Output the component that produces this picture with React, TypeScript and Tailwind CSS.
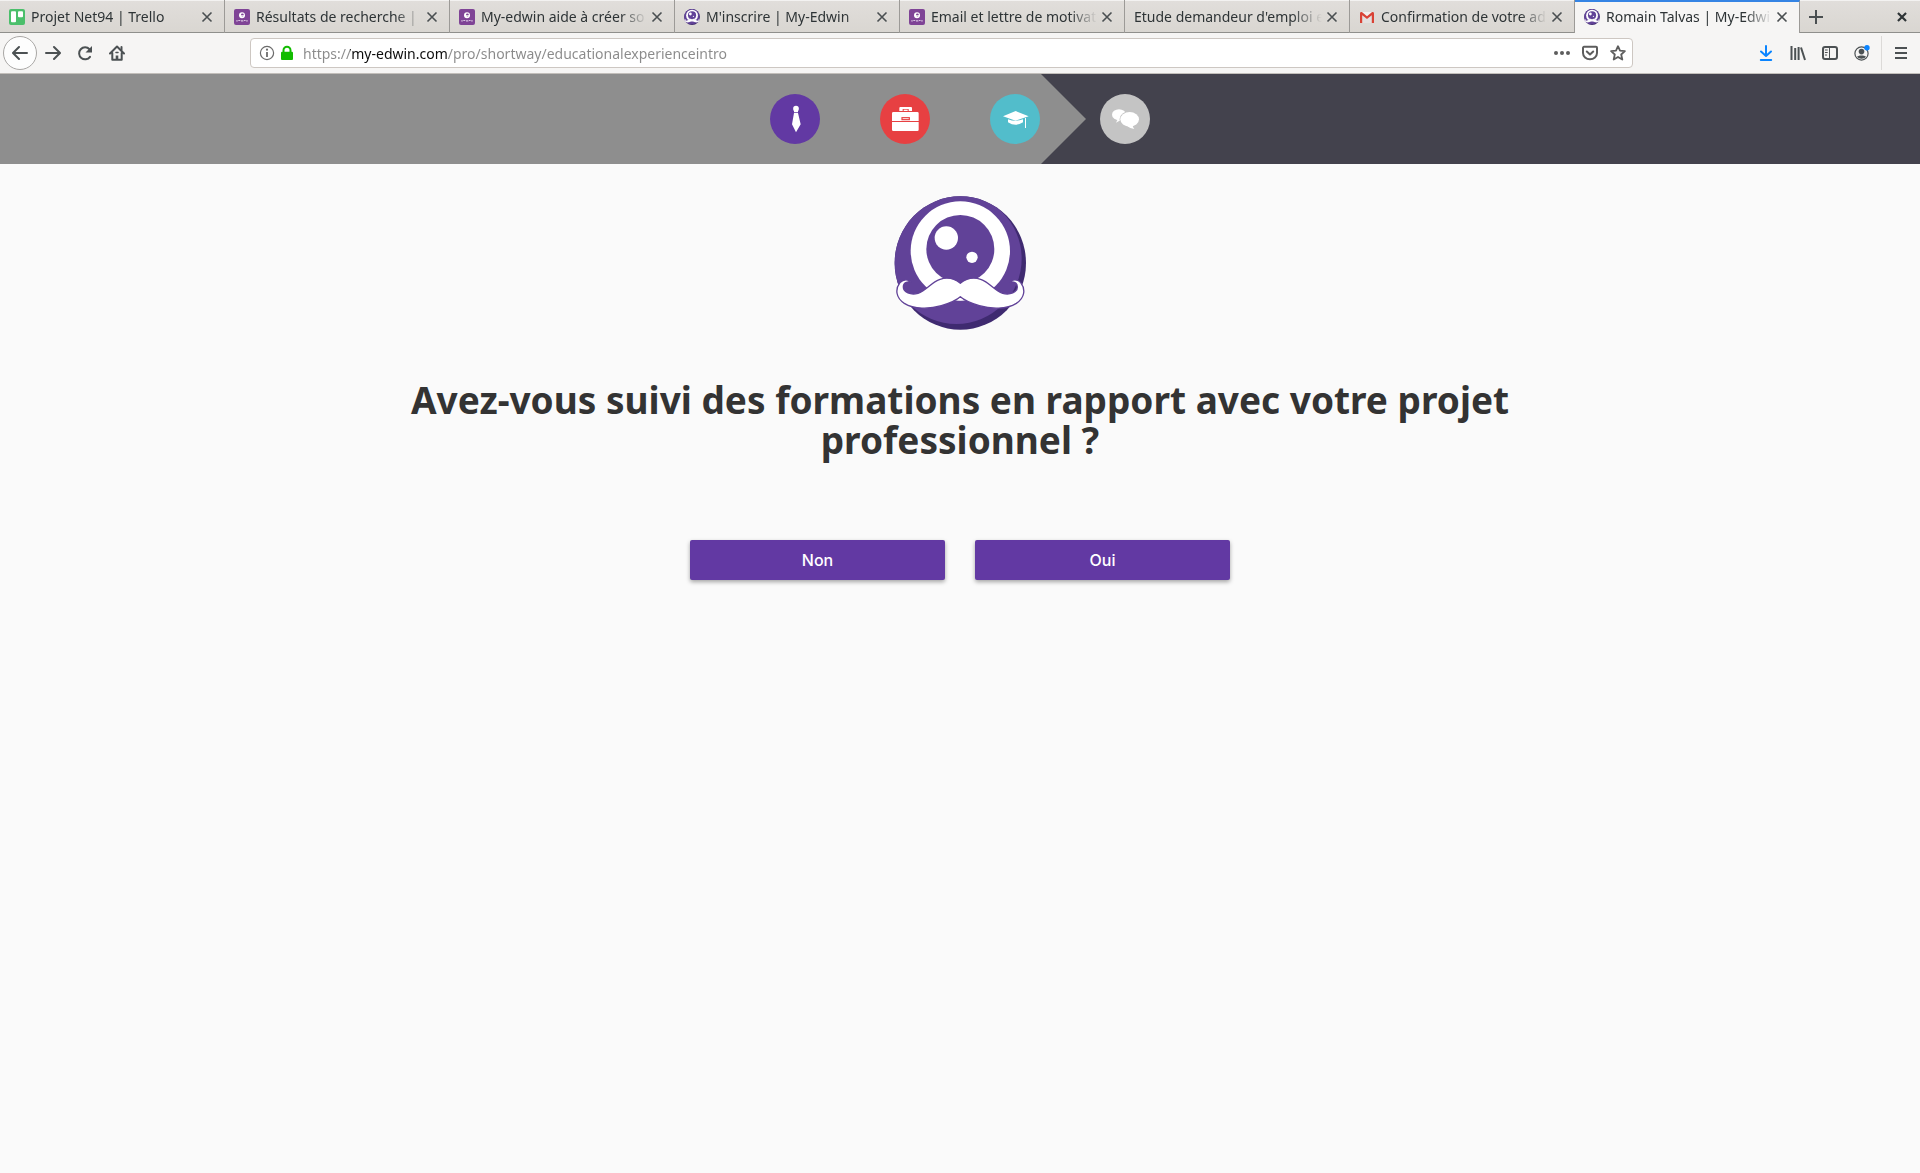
import React from "react";
import clsx from "clsx";

type Favicon = "trello" | "blog" | "edwin" | "gmail" | null;

const tabs: { title: string; icon: Favicon; active?: boolean }[] = [
  { title: "Projet Net94 | Trello", icon: "trello" },
  { title: "Résultats de recherche | E", icon: "blog" },
  { title: "My-edwin aide à créer so", icon: "blog" },
  { title: "M'inscrire | My-Edwin", icon: "edwin" },
  { title: "Email et lettre de motivat", icon: "blog" },
  { title: "Etude demandeur d'emploi e", icon: null },
  { title: "Confirmation de votre adr", icon: "gmail" },
  { title: "Romain Talvas | My-Edwi", icon: "edwin", active: true },
];

const MOUSTACHE =
  "M243 293 C226 279 204 274 182 281 C155 290 142 314 116 323 C94 329 72 320 72 304 C72 291 84 287 94 290 C88 280 73 279 62 291 C47 310 49 336 75 353 C104 371 150 371 186 360 C211 352 230 345 243 333 C256 345 275 352 300 360 C336 371 382 371 411 353 C437 336 439 310 424 291 C413 279 398 280 392 290 C402 287 414 291 414 304 C414 320 392 329 370 323 C344 314 331 290 304 281 C282 274 260 279 243 293 Z";

function EdwinLogo({ className }: { className?: string }) {
  return (
    <svg viewBox="43 31 398 402" className={className} aria-hidden="true">
      <defs>
        <clipPath id="ball">
          <ellipse cx="243" cy="232" rx="197" ry="200" />
        </clipPath>
      </defs>
      <ellipse cx="243" cy="232" rx="197" ry="200" fill="#3f2a70" />
      <circle cx="231" cy="219" r="196" fill="#614298" clipPath="url(#ball)" />
      <circle cx="243" cy="196" r="149" fill="#fff" />
      <circle cx="243" cy="190" r="102" fill="#614298" />
      <circle cx="201" cy="157" r="35" fill="#fff" />
      <circle cx="278" cy="215" r="17" fill="#fff" />
      <path d={MOUSTACHE} fill="#fff" stroke="#614298" strokeWidth="4" strokeLinejoin="round" />
      <path d="M233 344 L243 338 L253 344 Z" fill="#fff" />
    </svg>
  );
}

function TabIcon({ name }: { name: Favicon }) {
  if (name === "trello") {
    return (
      <svg viewBox="0 0 16 16" className="size-4 shrink-0" aria-hidden="true">
        <rect width="16" height="16" rx="2" fill="#4bbf6b" />
        <rect x="2" y="2.3" width="5" height="11" rx="1" fill="#fff" />
        <rect x="9" y="2.3" width="5" height="6" rx="1" fill="#fff" />
      </svg>
    );
  }
  if (name === "blog") {
    return (
      <svg viewBox="0 0 16 16" className="size-4 shrink-0" aria-hidden="true">
        <rect width="16" height="16" rx="2" fill="#7f4496" />
        <circle cx="8" cy="6.3" r="3" fill="#fff" />
        <circle cx="8.4" cy="6" r="1.4" fill="#7f4496" />
        <path d="M7 6.6h4" stroke="#fff" strokeWidth="0.8" />
        <path d="M2.3 11.8h1.4M4.3 11.5h2M7 11.8h2.4M10 11.5h1.6M12.2 11.8h1.5" stroke="#d9c4e2" strokeWidth="1.2" />
      </svg>
    );
  }
  if (name === "gmail") {
    return (
      <svg viewBox="0 0 16 16" className="size-4 shrink-0" aria-hidden="true">
        <path d="M2 3h12v11H2z" fill="#f1efee" />
        <path d="M3 14V6l5 4 5-4v8z" fill="#e3e0df" />
        <path d="M1 14V4.5C1 3 2.3 2.6 3.2 3.3L8 7.2l4.8-3.900C13.7 2.6 15 3 15 4.5V14h-2.2V6.3L8 10 3.2 6.300V14z" fill="#d94235" />
      </svg>
    );
  }
  if (name === "edwin") return <EdwinLogo className="size-4 shrink-0" />;
  return null;
}

function CloseIcon({ className }: { className?: string }) {
  return (
    <svg viewBox="0 0 16 16" className={className} fill="none" stroke="currentColor" aria-hidden="true">
      <path d="M3.5 3.5l9 9M12.5 3.5l-9 9" />
    </svg>
  );
}

function TabBar() {
  return (
    <div className="flex h-[33px] bg-linear-to-b from-[#e1dedb] to-[#d9d6d1] shadow-[inset_0_-1px_#8f8f8c,inset_0_1px_#f3f2f1]">
      {tabs.map((tab) => (
        <div
          key={tab.title}
          className={clsx(
            "flex w-[225px] items-center border-r border-[#9c9a97] px-[9px]",
            tab.active && "border-t-2 border-t-[#3584e4] bg-[#f6f5f4] pb-0.5"
          )}
        >
          <TabIcon name={tab.icon} />
          <span
            className={clsx(
              "min-w-0 flex-1 overflow-hidden whitespace-nowrap text-sm leading-5 text-[#2e3436] mask-r-from-[84%] mask-r-to-100%",
              tab.icon && "ml-1.5"
            )}
          >
            {tab.title}
          </span>
          <button aria-label="Fermer l'onglet" className="ml-0.5 text-[#4a4f51]">
            <CloseIcon className="size-4 stroke-[1.6]" />
          </button>
        </div>
      ))}
      <button aria-label="Nouvel onglet" className="flex w-8 items-center justify-center text-[#4a4f51]">
        <svg viewBox="0 0 16 16" className="size-4" stroke="currentColor" strokeWidth="2" aria-hidden="true">
          <path d="M8 1v14M1 8h14" />
        </svg>
      </button>
      <button aria-label="Fermer la fenêtre" className="ml-auto mr-2.5 text-[#2e3436]">
        <CloseIcon className="size-4 scale-90 stroke-[2.4]" />
      </button>
    </div>
  );
}

function ToolButton({ label, children, round }: { label: string; children: React.ReactNode; round?: boolean }) {
  return (
    <button
      aria-label={label}
      className={clsx(
        "flex shrink-0 items-center justify-center",
        round ? "size-[34px] rounded-full border border-[#a9a7a5] bg-[#fdfdfd]" : "size-8"
      )}
    >
      <svg viewBox="0 0 16 16" className="size-4" fill="none" stroke="currentColor" strokeWidth="2" strokeLinecap="round" strokeLinejoin="round" aria-hidden="true">
        {children}
      </svg>
    </button>
  );
}

function Toolbar() {
  return (
    <div className="flex h-[41px] items-center border-b border-[#c2beba] bg-[#f6f5f4] px-[3px] text-[#4c5153]">
      <ToolButton label="Précédent" round>
        <path d="M15 8H1.5M7 2L1 8l6 6" />
      </ToolButton>
      <ToolButton label="Suivant">
        <path d="M1 8h13.5M9 2l6 6-6 6" />
      </ToolButton>
      <ToolButton label="Actualiser">
        <path d="M13 11.8A6 6 0 1 1 12.5 4.2" />
        <path d="M15 1v6.5H8.5z" fill="currentColor" stroke="none" />
      </ToolButton>
      <ToolButton label="Accueil">
        <path d="M1 8.5L8 1.5l7 7M3.3 8v6.8h9.4V8" />
        <path d="M12.5 2v3" />
        <path d="M8 14.5v-4" strokeWidth="2.6" strokeLinecap="butt" />
        <path d="M7 7.5h2" strokeWidth="1.5" />
      </ToolButton>

      <div className="mx-[117px] flex h-[30px] min-w-0 flex-1 items-center rounded border border-[#cdc7c2] bg-white pl-2 pr-1.5">
        <svg viewBox="0 0 16 16" className="size-4 text-[#6b6b6b]" fill="none" stroke="currentColor" aria-hidden="true">
          <circle cx="8" cy="8" r="6.6" strokeWidth="1.2" />
          <path d="M8 7v5" strokeWidth="1.8" />
          <circle cx="8" cy="4.7" r="1.1" fill="currentColor" stroke="none" />
        </svg>
        <svg viewBox="0 0 16 16" className="ml-1 size-4 text-[#12bc00]" aria-hidden="true">
          <path d="M4.5 8V5.2a3.5 3.5 0 0 1 7 0V8" fill="none" stroke="currentColor" strokeWidth="2" />
          <rect x="2" y="6.8" width="12" height="8.2" rx="1" fill="currentColor" />
        </svg>
        <input
          type="text"
          aria-label="Adresse"
          defaultValue="https://my-edwin.com/pro/shortway/educationalexperienceintro"
          className="ml-2 h-7 min-w-0 flex-1 bg-[linear-gradient(90deg,#8a8a8a_47px,#0c0c0c_47px,#0c0c0c_145px,#8a8a8a_145px)] bg-clip-text text-sm text-transparent outline-none"
        />
        <div className="flex items-center gap-3 text-[#5d5d5d]">
          <svg viewBox="0 0 16 16" className="size-4" fill="currentColor" aria-hidden="true">
            <circle cx="2" cy="8" r="2" />
            <circle cx="8" cy="8" r="2" />
            <circle cx="14" cy="8" r="2" />
          </svg>
          <svg viewBox="0 0 16 16" className="size-4" fill="none" stroke="currentColor" strokeWidth="2" strokeLinecap="round" strokeLinejoin="round" aria-hidden="true">
            <path d="M2 1.8h12a1 1 0 0 1 1 1V8A7 6.3 0 0 1 1 8V2.8a1 1 0 0 1 1-1z" />
            <path d="M4.8 6.5L8 9.5l3.2-3" />
          </svg>
          <svg viewBox="0 0 16 16" className="size-4" fill="none" stroke="currentColor" strokeWidth="1.8" strokeLinejoin="round" aria-hidden="true">
            <path d="M8 1.2l2 4.5 4.9.5-3.7 3.3 1.1 5L8 12l-4.3 2.5 1.1-5L1.1 6.2 6 5.7z" />
          </svg>
        </div>
      </div>

      <ToolButton label="Téléchargements">
        <path d="M8 1v9.5M3 6.5l5 4.5 5-4.5M2.8 15h10.4" stroke="#0a84ff" />
      </ToolButton>
      <ToolButton label="Bibliothèque">
        <path d="M1.5 1v14M5.2 3v12M8.6 2v13M11 2.500l4 12.500" strokeLinecap="butt" />
      </ToolButton>
      <ToolButton label="Barres latérales">
        <rect x="1" y="2" width="14" height="12" rx="2" />
        <path d="M7.5 2v12M3.3 5h2M3.3 7.5h2M3.3 10h1.4" strokeWidth="1" />
      </ToolButton>
      <ToolButton label="Compte">
        <circle cx="7.5" cy="8.5" r="6.6" strokeWidth="1.2" />
        <circle cx="7.5" cy="6.6" r="2.8" fill="currentColor" stroke="none" />
        <path d="M3 11.5c2-1.5 7-1.5 9 0-1.5 3-7.5 3-9 0z" fill="currentColor" stroke="none" />
        <circle cx="13" cy="2.8" r="2.7" fill="#0a84ff" stroke="none" />
      </ToolButton>
      <div className="mx-[3px] h-[34px] w-px bg-[#dcdad8]" />
      <ToolButton label="Menu">
        <path d="M2 3h12M2 8h12M2 13h12" strokeLinecap="butt" />
      </ToolButton>
    </div>
  );
}

function StepsHeader() {
  return (
    <nav aria-label="Étapes" className="flex h-[90px] items-center bg-[#43424d]">
      <div className="flex h-full w-[calc(50%+81px)] items-center justify-end gap-[60px] bg-[#8e8e8e] pr-px">
        <svg viewBox="0 0 150 150" className="size-[50px]" fill="#fff" role="img" aria-label="Métier">
          <circle cx="75" cy="75" r="75" fill="#6239a3" />
          <circle cx="78" cy="44" r="8.5" />
          <path d="M72 51h12v4H72zM72 57h12l8 34-14 24-12-24z" />
        </svg>
        <svg viewBox="0 0 150 150" className="size-[50px]" fill="#fff" role="img" aria-label="Expériences">
          <circle cx="75" cy="75" r="75" fill="#e74042" />
          <path d="M58 51V42q0-3 3-3h32q3 0 3 3v9H86V45H68v6z" />
          <path d="M71 51v-4h12v4z" />
          <path d="M40 54h72q4 0 4 4v23H36V58q0-4 4-4zM36 84h80v23q0 4-4 4H40q-4 0-4-4z" />
          <rect x="66" y="71" width="22" height="6" fill="none" stroke="#e74042" strokeWidth="3.5" />
        </svg>
        <svg viewBox="0 0 150 150" className="size-[50px]" fill="#fff" role="img" aria-label="Formations">
          <circle cx="75" cy="75" r="75" fill="#52bdcb" />
          <path d="M39 67l38-16 39 16-39 13z" />
          <path d="M54 76q23 9 45 0v9q-22 15-45 0z" />
          <path d="M105 72h3v30h-3z" />
        </svg>
      </div>
      <svg viewBox="0 0 45 90" className="h-[90px] w-[45px]" aria-hidden="true">
        <path d="M0 0l45 45L0 90z" fill="#8e8e8e" />
      </svg>
      <svg viewBox="0 0 150 150" className="ml-3.5 size-[50px]" fill="#fff" role="img" aria-label="Entretien">
        <circle cx="75" cy="75" r="75" fill="#c4c4c4" />
        <ellipse cx="57" cy="62" rx="21" ry="16.5" />
        <path d="M53 76l-5 10 16-9z" />
        <ellipse cx="89" cy="76" rx="28" ry="22" stroke="#c4c4c4" strokeWidth="5" paintOrder="stroke" />
        <path d="M82 97q10 8 21 8-5-4-5-11z" />
      </svg>
    </nav>
  );
}

function AnswerButton({ children }: { children: React.ReactNode }) {
  return (
    <button className="h-10 w-[255px] rounded-xs bg-[#6239a3] font-['Inter',sans-serif] text-base font-medium text-white shadow-[0_2px_4px_rgba(0,0,0,0.35)]">
      {children}
    </button>
  );
}

export default function App() {
  return (
    <div className="min-h-screen bg-[#fafafa] font-['Noto_Sans',sans-serif]">
      <TabBar />
      <Toolbar />
      <StepsHeader />
      <main className="flex flex-col items-center px-8 pt-8">
        <EdwinLogo className="h-[134px] w-[134px]" />
        <h1 className="mt-[50px] max-w-[1170px] text-center text-[37px] font-bold leading-10 text-[#333]">
          Avez-vous suivi des formations en rapport avec votre projet professionnel ?
        </h1>
        <div className="mt-20 flex gap-[30px]">
          <AnswerButton>Non</AnswerButton>
          <AnswerButton>Oui</AnswerButton>
        </div>
      </main>
    </div>
  );
}
